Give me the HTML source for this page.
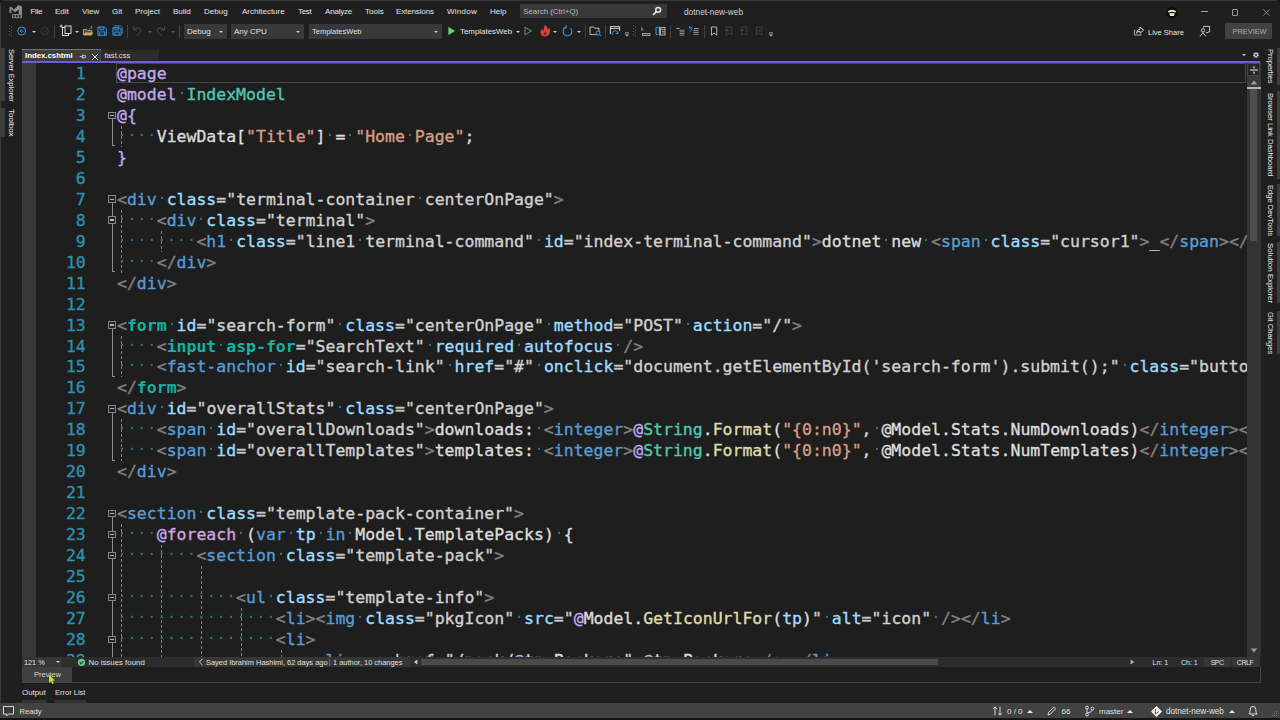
<!DOCTYPE html>
<html lang="en">
<head>
<meta charset="utf-8">
<title>Index.cshtml - dotnet-new-web</title>
<style>
*{box-sizing:border-box;margin:0;padding:0}
html,body{width:1280px;height:720px;overflow:hidden;background:#141414}
body{position:relative;font-family:"Liberation Sans","DejaVu Sans",sans-serif;font-size:8px;color:#e4e4e4;-webkit-font-smoothing:antialiased}
.abs{position:absolute}
#win{position:absolute;left:0;top:0;width:1280px;height:718px;background:#1f1f1f;border-radius:5px 5px 0 0;overflow:hidden}
/* menu */
.menu span{position:absolute;top:6.7px;line-height:10px;font-size:8px;color:#e6e6e6;white-space:nowrap}
#search{left:520px;top:3.7px;width:147px;height:14.7px;background:#383838}
#search span{position:absolute;left:3.3px;top:3px;line-height:10px;font-size:7.8px;color:#bcbcbc}
#title{left:684px;top:6.7px;line-height:10px;font-size:8.3px;color:#d0d0d0}
/* toolbar */
.combo{position:absolute;top:24.3px;height:14.6px;background:#383838;font-size:8px;line-height:15px;color:#e0e0e0;padding-left:3px;white-space:nowrap}
.combo:after{content:"";position:absolute;right:4px;top:7px;border:2px solid transparent;border-top:2.5px solid #d0d0d0;border-bottom:0}
.dd{position:absolute;width:0;height:0;border:2px solid transparent;border-top:2.5px solid #d0d0d0;border-bottom:0}
.sep{position:absolute;top:25px;width:1px;height:13px;background:#424242}
.tbt{position:absolute;top:26px;line-height:10px;font-size:8px;color:#e6e6e6;white-space:nowrap}
/* tabs */
#tabA{left:22px;top:49px;width:79px;height:12px;background:#3d3d3d;border-top:1px solid #7160e8}
#tabA b{position:absolute;left:3px;top:1px;line-height:10px;font-size:7.9px;color:#fff;font-weight:bold;letter-spacing:-0.05px}
#tabB{left:101px;top:50px;width:58px;height:11px;background:#2b2b2b}
#tabB span{position:absolute;left:3.5px;top:0.8px;line-height:10px;font-size:7.6px;color:#e0e0e0}
#tabline{left:22px;top:60.7px;width:1238px;height:2.2px;background:#6b5fd6;z-index:3}
/* side */
.vtab{position:absolute;writing-mode:vertical-rl;font-size:7.6px;line-height:10px;color:#ececec;white-space:nowrap}
.bar{position:absolute;background:#3d3d3d}
/* editor */
#ed{left:22px;top:62px;width:1225px;height:595px;background:#1e1e1e;overflow:hidden}
#gut{left:0;top:0;width:14px;height:595px;background:#383838}
.l{position:absolute;left:95px;height:21px;line-height:21px;white-space:pre;font-family:"DejaVu Sans Mono","Liberation Mono",monospace;font-size:16.5px;letter-spacing:-0.009px;color:#dcdcdc;-webkit-text-stroke:0.35px currentColor}
.n{position:absolute;left:30px;width:33.8px;text-align:right;height:21px;line-height:21px;font-family:"DejaVu Sans Mono","Liberation Mono",monospace;font-size:16.5px;letter-spacing:-0.009px;color:#2b91af;-webkit-text-stroke:0.35px currentColor}
.w{background:radial-gradient(circle at 50% 41%,#23768e 0,#23768e 0.9px,rgba(35,118,142,0) 1.5px) 0 0/1ch 100% repeat-x}
.rz{color:#c2a7ee}.ty{color:#4ec9b0}.st{color:#d69d85}.dl{color:#808080}.el{color:#569cd6}.at{color:#9cdcfe}.av{color:#d0d0d0}
.kw{color:#569cd6}.ck{color:#d8a0df}.mt{color:#dcdcaa}.lv{color:#9cdcfe}.th{color:#14b2a4;font-weight:bold;-webkit-text-stroke:0}.op{color:#c8c8c8}
#cur{left:94px;top:1px;width:1130px;height:20px;border:1px solid #464646}
.cb{position:absolute;left:86px;width:7.5px;height:7.5px;border:1px solid #868686;background:#242424}
.cb:after{content:"";position:absolute;left:1px;top:2.2px;width:3.5px;height:1.2px;background:#b4b4b4}
.vl{position:absolute;left:89.5px;width:1.2px;background:#8e8e8e}
.ft{position:absolute;left:89.5px;width:3.4px;height:1px;background:#8e8e8e}
.ig{position:absolute;width:1px;background:repeating-linear-gradient(to bottom,#808080 0,#808080 2.6px,transparent 2.6px,transparent 5px)}
/* scrollbar */
#vs{left:1247px;top:62px;width:14px;height:595px;background:#333}
/* bottom */
.sb{font-size:8px;line-height:10px;color:#e0e0e0;white-space:nowrap;position:absolute}
</style>
</head>
<body>
<div id="win">
<!-- MENU -->
<div class="menu">
<span style="left:30.5px;letter-spacing:-0.3px">File</span><span style="left:55px">Edit</span><span style="left:82px">View</span><span style="left:112px">Git</span><span style="left:135px">Project</span><span style="left:173px">Build</span><span style="left:204px">Debug</span><span style="left:242px">Architecture</span><span style="left:298px;letter-spacing:-0.35px">Test</span><span style="left:325px;letter-spacing:-0.2px">Analyze</span><span style="left:365px">Tools</span><span style="left:396px;letter-spacing:-0.13px">Extensions</span><span style="left:447px;letter-spacing:0.25px">Window</span><span style="left:490px">Help</span>
</div>
<div id="search" class="abs"><span>Search (Ctrl+Q)</span></div>
<div id="title" class="abs">dotnet-new-web</div>
<!-- LOGO + WINDOW CONTROLS -->
<div class="abs" style="left:0;top:0;width:1280px;height:1px;background:#363636"></div><div class="abs" style="left:0;top:0;width:1px;height:718px;background:#3a3a3a"></div>
<svg class="abs" style="left:8px;top:4px" width="16" height="16" viewBox="0 0 16 16"><path d="M1.5 3.5 L3 2.6 L5.8 5.6 L10.6 1 L14 2.6 V10 H10.8 V5.4 L7.2 8.2 L3.4 5.2 V9 H1.5 Z" fill="#8c8c8c"/><rect x="4" y="10" width="10" height="4.2" fill="#7a7a7a"/><rect x="5" y="11" width="1.6" height="2.2" fill="#2a2a2a"/><rect x="8" y="11" width="1.6" height="2.2" fill="#2a2a2a"/><rect x="11" y="11" width="1.6" height="2.2" fill="#2a2a2a"/></svg>
<svg class="abs" style="left:652px;top:6px" width="10" height="10" viewBox="0 0 10 10"><circle cx="6.2" cy="3.8" r="2.4" fill="none" stroke="#e8e8e8" stroke-width="1.5"/><path d="M4.4 5.6 L1 9" stroke="#e8e8e8" stroke-width="1.7"/></svg>
<svg class="abs" style="left:1165px;top:5px" width="14" height="14" viewBox="0 0 14 14"><circle cx="7" cy="7.5" r="6" fill="#0c0c0c"/><path d="M2.5 6.5 Q7 3 11.5 6.5 L10 7.5 Q7 6.2 4 7.5 Z" fill="#efe9d8"/><rect x="4.5" y="8" width="5" height="2" fill="#d9c9a0"/><rect x="5" y="9.5" width="4" height="1.5" fill="#e8e8e8"/></svg>
<div class="abs" style="left:1201px;top:11.3px;width:6.5px;height:1px;background:#9e9e9e"></div>
<div class="abs" style="left:1232.3px;top:8.6px;width:6.2px;height:7px;border:0.8px solid #9a9a9a;border-radius:1px"></div>
<svg class="abs" style="left:1262px;top:7.5px" width="9" height="9" viewBox="0 0 9 9"><path d="M1.2 1.2 L7.6 7.6 M7.6 1.2 L1.2 7.6" stroke="#9e9e9e" stroke-width="0.8"/></svg>
<!-- TOOLBAR -->
<svg class="abs" style="left:8px;top:24px" width="6" height="15" viewBox="0 0 6 15"><g fill="#5a5a5a"><rect x="1" y="1" width="1" height="1"/><rect x="3" y="2.5" width="1" height="1"/><rect x="1" y="4" width="1" height="1"/><rect x="3" y="5.5" width="1" height="1"/><rect x="1" y="7" width="1" height="1"/><rect x="3" y="8.5" width="1" height="1"/><rect x="1" y="10" width="1" height="1"/><rect x="3" y="11.5" width="1" height="1"/></g></svg>
<svg class="abs" style="left:16px;top:25px" width="12" height="12" viewBox="0 0 12 12"><circle cx="5.7" cy="6" r="4" fill="none" stroke="#3a96dd" stroke-width="1"/><path d="M7.4 6 H4.4 M5.6 4.6 L4.2 6 L5.6 7.4" stroke="#3a96dd" stroke-width="0.9" fill="none"/></svg>
<div class="dd" style="left:31.5px;top:30.5px"></div>
<svg class="abs" style="left:39px;top:25px" width="12" height="12" viewBox="0 0 12 12"><circle cx="5.7" cy="6" r="3.7" fill="none" stroke="#3c3c3c" stroke-width="0.9"/><path d="M4.2 6 H7.2 M6 4.6 L7.4 6 L6 7.4" stroke="#3c3c3c" stroke-width="0.8" fill="none"/></svg>
<div class="sep" style="left:54px"></div>
<svg class="abs" style="left:59px;top:24px" width="14" height="14" viewBox="0 0 14 14"><rect x="3.5" y="3.5" width="6" height="8" fill="none" stroke="#d8d8d8" stroke-width="1"/><rect x="6" y="2" width="6" height="7.5" fill="#1f1f1f" stroke="#d8d8d8" stroke-width="1"/><path d="M2.2 0.6 V3.8 M0.6 2.2 H3.8" stroke="#e6c87a" stroke-width="1"/></svg>
<div class="dd" style="left:74.5px;top:30.5px"></div>
<svg class="abs" style="left:82px;top:24px" width="13" height="14" viewBox="0 0 13 14"><path d="M1.4 5.4 H4.6 L5.6 6.4 H9.8 V11 H1.4 Z" fill="#5e4c30" stroke="#dcb67a" stroke-width="0.8"/><path d="M1.4 11 L3 8.4 H11.2 L9.8 11 Z" fill="#c9a66e"/><path d="M7.6 5.4 Q7.8 3.4 10 3.2 M9 2 L10.4 3.2 L9 4.4" stroke="#3a96dd" stroke-width="0.9" fill="none"/></svg>
<svg class="abs" style="left:97.3px;top:26.1px" width="11" height="11" viewBox="0 0 11 11"><path d="M0.9 0.9 H7.6 L9.3 2.6 V9.3 H0.9 Z" fill="#1a3146" stroke="#3f9ce8" stroke-width="0.9"/><path d="M2.9 0.9 V3.5 H6.7 V0.9 M2.7 9.3 V5.9 H7.5 V9.3" fill="none" stroke="#3f9ce8" stroke-width="0.8"/></svg>
<svg class="abs" style="left:112.2px;top:25.4px" width="11" height="12" viewBox="0 0 11 12"><path d="M0.9 2.6 H7.4 L9.1 4.2 V10.2 H0.9 Z" fill="#1a3146" stroke="#3f9ce8" stroke-width="0.9"/><path d="M2.4 0.9 H8.6 L10.2 2.4 V8.6" fill="none" stroke="#3f9ce8" stroke-width="0.8"/><path d="M2.9 2.6 V4.8 H6.5 V2.6 M2.7 10.2 V7 H7.3 V10.2" fill="none" stroke="#3f9ce8" stroke-width="0.8"/></svg>
<div class="sep" style="left:127px"></div>
<svg class="abs" style="left:132px;top:25px" width="11" height="12" viewBox="0 0 11 12"><path d="M1.4 1.6 V5 H4.8 M1.6 4.8 Q5 1.6 8 3.4 Q9.8 5.2 7.6 7.8 L4.6 10.6" fill="none" stroke="#4c4c4c" stroke-width="1"/></svg>
<div class="dd" style="left:147.5px;top:30.5px;border-top-color:#5a5a5a"></div>
<svg class="abs" style="left:155px;top:25px" width="11" height="12" viewBox="0 0 11 12"><path d="M9.6 1.6 V5 H6.2 M9.4 4.8 Q6 1.6 3 3.4 Q1.2 5.2 3.4 7.8 L6.4 10.6" fill="none" stroke="#4c4c4c" stroke-width="1"/></svg>
<div class="dd" style="left:170.5px;top:30.5px;border-top-color:#5a5a5a"></div>
<div class="sep" style="left:179px"></div>
<svg class="abs" style="left:447px;top:26px" width="9" height="10" viewBox="0 0 9 10"><path d="M1.4 0.8 L8 5 L1.4 9.2 Z" fill="#62cf72"/></svg>
<div class="dd" style="left:515.5px;top:30.5px"></div>
<svg class="abs" style="left:523px;top:26px" width="10" height="10" viewBox="0 0 10 10"><path d="M2 1.2 L8.4 5 L2 8.8 Z" fill="none" stroke="#5a9e66" stroke-width="1"/></svg>
<svg class="abs" style="left:539px;top:24px" width="12" height="14" viewBox="0 0 12 14"><path d="M6 1 Q9 3 8.4 5.4 Q10.2 4.6 9.8 3 Q12 6 10.6 9.4 Q9.2 12.4 6 12.4 Q2.6 12.4 1.6 9.4 Q0.8 6.4 3.4 4.4 Q3.4 6.2 4.6 6.4 Q4.4 3.2 6 1 Z" fill="#cf4436"/><path d="M6 7.4 Q7.8 8.8 7 10.6 Q6.2 11.6 5.2 10.8 Q4.4 9.4 6 7.4 Z" fill="#7a2620"/></svg>
<div class="dd" style="left:553px;top:30.5px"></div>
<svg class="abs" style="left:561px;top:24px" width="13" height="14" viewBox="0 0 13 14"><path d="M5 3.2 A4.4 4.4 0 1 0 9.6 4.2" fill="none" stroke="#3a96dd" stroke-width="1.1"/><path d="M5.2 1 V4 H2.4" fill="none" stroke="#3a96dd" stroke-width="1"/></svg>
<div class="dd" style="left:577px;top:30.5px"></div>
<div class="sep" style="left:585px"></div>
<svg class="abs" style="left:589px;top:25px" width="13" height="12" viewBox="0 0 13 12"><path d="M1 2 H4.6 L5.6 3.2 H10 V9.6 H1 Z" fill="none" stroke="#dcb67a" stroke-width="1"/><circle cx="9" cy="8" r="2" fill="#1f1f1f" stroke="#3a96dd" stroke-width="1"/><path d="M10.4 9.4 L12 11" stroke="#3a96dd" stroke-width="1"/></svg>
<div class="sep" style="left:605px"></div>
<svg class="abs" style="left:609px;top:25px" width="13" height="12" viewBox="0 0 13 12"><path d="M1.4 9 V1.6 H10.6 V6" fill="none" stroke="#d8d8d8" stroke-width="1"/><path d="M1.4 3.4 H10.6" stroke="#d8d8d8" stroke-width="1"/><path d="M4 10 A2.6 2.6 0 1 1 8.6 8.4 M8.8 6.6 V8.6 H6.8" fill="none" stroke="#3a96dd" stroke-width="1"/></svg>
<svg class="abs" style="left:624px;top:32.3px" width="6" height="6" viewBox="0 0 6 6"><rect x="1" y="0.6" width="4" height="0.8" fill="#c4c4c4"/><path d="M1 2.6 H5 L3 4.6 Z" fill="#c4c4c4"/></svg>
<svg class="abs" style="left:632px;top:24px" width="6" height="15" viewBox="0 0 6 15"><g fill="#5a5a5a"><rect x="1" y="1" width="1" height="1"/><rect x="3" y="2.5" width="1" height="1"/><rect x="1" y="4" width="1" height="1"/><rect x="3" y="5.5" width="1" height="1"/><rect x="1" y="7" width="1" height="1"/><rect x="3" y="8.5" width="1" height="1"/><rect x="1" y="10" width="1" height="1"/><rect x="3" y="11.5" width="1" height="1"/></g></svg>
<svg class="abs" style="left:640px;top:25px" width="12" height="12" viewBox="0 0 12 12"><path d="M1.2 1.4 L1.2 6 L2.6 5 L4 5.6 Z" fill="#3a96dd"/><path d="M2.4 8.6 H10 V10.4 H2.4 Z" fill="none" stroke="#d0d0d0" stroke-width="0.8"/></svg>
<svg class="abs" style="left:654px;top:25px" width="13" height="12" viewBox="0 0 13 12"><path d="M4.2 2.4 H2 V9.6 H4.2" fill="none" stroke="#3a96dd" stroke-width="1"/><rect x="6.6" y="2.4" width="4.4" height="7.6" fill="none" stroke="#d0d0d0" stroke-width="0.8"/><path d="M6.6 4.4 H11 M8 6.4 H10.6 M8 8 H10.6" stroke="#d0d0d0" stroke-width="0.7"/><path d="M5.4 1.6 V10.6" stroke="#d0d0d0" stroke-width="0.8"/></svg>
<div class="sep" style="left:670px"></div>
<svg class="abs" style="left:675px;top:26px" width="11" height="10" viewBox="0 0 11 10"><path d="M1.4 2.4 H4.6" stroke="#d0d0d0" stroke-width="0.8"/><path d="M4.6 4.2 H9.4 M4.6 7.4 H9.4" stroke="#4fc27a" stroke-width="0.9"/><path d="M4.6 5.8 H9.4 M4.6 9 H9.4" stroke="#c0c0c0" stroke-width="0.7"/></svg>
<svg class="abs" style="left:688px;top:25px" width="12" height="11" viewBox="0 0 12 11"><path d="M1.6 2.4 Q3.2 1.6 4.2 3.4 L2 6.6 M1.4 1.4 V3.2 H3" stroke="#3a96dd" stroke-width="0.9" fill="none"/><path d="M6 3.6 H10.6" stroke="#d0d0d0" stroke-width="0.8"/><path d="M5.4 5.6 H10.6 M5.4 7.4 H10.6 M5.4 9.2 H10.6" stroke="#c0c0c0" stroke-width="0.7"/></svg>
<div class="sep" style="left:704px"></div>
<svg class="abs" style="left:709px;top:25px" width="10" height="12" viewBox="0 0 10 12"><path d="M2.4 2 H7.8 V10.2 L5.1 8 L2.4 10.2 Z" fill="none" stroke="#dcdcdc" stroke-width="0.8"/></svg>
<svg class="abs" style="left:724px;top:25px" width="10" height="12" viewBox="0 0 10 12"><path d="M2.4 2 H7.8 V10.2 L5.1 8 L2.4 10.2 Z M0.6 5.4 H4.4 M3 4 L4.4 5.4 L3 6.8" fill="none" stroke="#464646" stroke-width="0.8"/></svg>
<svg class="abs" style="left:739px;top:25px" width="10" height="12" viewBox="0 0 10 12"><path d="M2.4 2 H7.8 V10.2 L5.1 8 L2.4 10.2 Z M0.6 5.4 H4.4 M3 4 L4.4 5.4 L3 6.8" fill="none" stroke="#464646" stroke-width="0.8"/></svg>
<svg class="abs" style="left:754px;top:25px" width="10" height="12" viewBox="0 0 10 12"><path d="M2.4 2 H7.8 V10.2 L5.1 8 L2.4 10.2 Z M3.6 4 L6.6 7 M6.6 4 L3.6 7" fill="none" stroke="#464646" stroke-width="0.8"/></svg>
<svg class="abs" style="left:767.5px;top:32.3px" width="6" height="6" viewBox="0 0 6 6"><rect x="1" y="0.6" width="4" height="0.8" fill="#c4c4c4"/><path d="M1 2.6 H5 L3 4.6 Z" fill="#c4c4c4"/></svg>
<svg class="abs" style="left:1133px;top:25px" width="12" height="12" viewBox="0 0 12 12"><path d="M2.4 5.4 H1.4 V10 H8 V9" fill="none" stroke="#bdbdbd" stroke-width="0.9"/><path d="M3.4 8 Q3.8 4.4 7 4.2 V2 L10.6 5.2 L7 8.2 V6.2 Q4.8 6 3.4 8 Z" fill="none" stroke="#e0e0e0" stroke-width="0.9"/></svg>
<svg class="abs" style="left:1198px;top:24px" width="14" height="14" viewBox="0 0 14 14"><circle cx="5" cy="6.4" r="1.7" fill="none" stroke="#d8d8d8" stroke-width="0.9"/><path d="M2 12.6 L5 8.6 L8 12.6" fill="none" stroke="#d8d8d8" stroke-width="0.9"/><path d="M5.6 3.6 V2.4 H11.6 V8 H10 L8.8 9.2 V8" fill="none" stroke="#d8d8d8" stroke-width="0.9"/></svg>
<div class="combo" style="left:184px;width:43px">Debug</div>
<div class="combo" style="left:231px;width:73px">Any CPU</div>
<div class="combo" style="left:309px;width:133px;font-size:7.5px">TemplatesWeb</div>
<div class="tbt" style="left:460px;top:26.8px;font-size:7.9px">TemplatesWeb</div>
<div class="tbt" style="left:1148px;top:28px;font-size:7.5px">Live Share</div>
<div class="abs" style="left:1225px;top:23px;width:47px;height:16px;background:#424242"><span class="abs" style="left:7.5px;top:3.8px;font-size:7.4px;line-height:10px;color:#adadad">PREVIEW</span></div>
<!-- TABS -->
<div id="tabA" class="abs"><b>Index.cshtml</b><svg class="abs" style="left:57px;top:3px" width="8" height="7" viewBox="0 0 8 7"><path d="M0.6 3.6 H3.4 M3.4 1.6 V5.6 M3.4 2.4 H6.4 V4.8 H3.4" fill="none" stroke="#e0e0e0" stroke-width="0.8"/></svg><svg class="abs" style="left:68.5px;top:2.5px" width="8" height="8" viewBox="0 0 8 8"><path d="M1 1 L7 7 M7 1 L1 7" stroke="#f0f0f0" stroke-width="1"/></svg></div>
<div id="tabB" class="abs"><span>fast.css</span></div>
<div id="tabline" class="abs"></div>
<!-- SIDE TABS -->
<div class="bar" style="left:0;top:48px;width:5px;height:53px"></div>
<div class="bar" style="left:0;top:108px;width:5px;height:29px"></div>
<div class="vtab" style="left:6.3px;top:49px">Server Explorer</div>
<div class="vtab" style="left:6.3px;top:109px;font-size:8px">Toolbox</div>
<div class="bar" style="left:1277px;top:48px;width:3px;height:37px"></div>
<div class="bar" style="left:1277px;top:91px;width:3px;height:88px"></div>
<div class="bar" style="left:1277px;top:184px;width:3px;height:52px"></div>
<div class="bar" style="left:1277px;top:242px;width:3px;height:61px"></div>
<div class="bar" style="left:1277px;top:311px;width:3px;height:43px"></div>
<div class="vtab" style="left:1265px;top:49px">Properties</div>
<div class="vtab" style="left:1265px;top:93px">Browser Link Dashboard</div>
<div class="vtab" style="left:1265px;top:185px">Edge DevTools</div>
<div class="vtab" style="left:1265px;top:243px;font-size:7.9px">Solution Explorer</div>
<div class="vtab" style="left:1265px;top:311.5px">Git Changes</div>
<!-- tab well right -->
<div class="dd" style="left:1242px;top:54px"></div>
<svg class="abs" style="left:1252px;top:51px" width="8" height="8" viewBox="0 0 8 8"><circle cx="4" cy="4" r="2.1" fill="none" stroke="#d8d8d8" stroke-width="1.5" stroke-dasharray="1.1 0.55"/><circle cx="4" cy="4" r="1.5" fill="none" stroke="#d8d8d8" stroke-width="0.9"/></svg>
<!-- SCROLLBAR -->
<div id="vs" class="abs">
<div class="abs" style="left:0;top:1px;width:13px;height:13px;background:#262626;border:1px solid #444"></div>
<svg class="abs" style="left:2px;top:3px" width="10" height="10" viewBox="0 0 10 10"><path d="M1 5 H9 M5 1.2 V3.6 M5 6.4 V8.8" stroke="#f0f0f0" stroke-width="1.1"/></svg>
<div class="abs" style="left:0;top:14px;width:14px;height:11px;background:#3a3a3a"></div>
<svg class="abs" style="left:3px;top:18px" width="8" height="5" viewBox="0 0 8 5"><path d="M0.6 4.6 L4 0.6 L7.4 4.6 Z" fill="#999"/></svg>
<div class="abs" style="left:3px;top:26px;width:7px;height:153px;background:#4d4d4d"></div>
<div class="abs" style="left:0;top:25px;width:14px;height:2px;background:#b4b4b4"></div>
<svg class="abs" style="left:3px;top:586px" width="8" height="5" viewBox="0 0 8 5"><path d="M0.6 0.4 L4 4.4 L7.4 0.4 Z" fill="#999"/></svg>
</div>
<!-- EDITOR -->
<div id="ed" class="abs">
<div id="gut" class="abs"></div>
<div id="cur" class="abs"></div>
<div id="outl">
<div class="vl" style="top:56.9px;height:27.4px"></div><div class="ft" style="top:83.4px"></div>
<div class="vl" style="top:140.8px;height:69.4px"></div><div class="ft" style="top:209.1px"></div>
<div class="vl" style="top:266.6px;height:48.4px"></div><div class="ft" style="top:313.9px"></div>
<div class="vl" style="top:350.4px;height:48.4px"></div><div class="ft" style="top:397.8px"></div>
<div class="vl" style="top:455.2px;height:144.8px"></div>
<div class="cb" style="top:49.5px"></div>
<div class="cb" style="top:133.4px"></div>
<div class="cb" style="top:154.3px"></div>
<div class="cb" style="top:259.2px"></div>
<div class="cb" style="top:343.0px"></div>
<div class="cb" style="top:447.8px"></div>
<div class="cb" style="top:468.8px"></div>
<div class="cb" style="top:489.7px"></div>
<div class="cb" style="top:531.7px"></div>
<div class="cb" style="top:573.6px"></div>
<div class="ig" style="left:99px;top:63.9px;height:21.0px"></div>
<div class="ig" style="left:99px;top:147.7px;height:62.9px"></div>
<div class="ig" style="left:139px;top:168.7px;height:21.0px"></div>
<div class="ig" style="left:99px;top:273.5px;height:41.9px"></div>
<div class="ig" style="left:99px;top:357.4px;height:41.9px"></div>
<div class="ig" style="left:99px;top:462.2px;height:137.8px"></div>
<div class="ig" style="left:139px;top:483.1px;height:116.9px"></div>
<div class="ig" style="left:179px;top:504.1px;height:95.9px"></div>
<div class="ig" style="left:219px;top:546.0px;height:54.0px"></div>
<div class="ig" style="left:259px;top:588.0px;height:12.0px"></div>
</div>
<div id="code">
<div class="n" style="top:1.00px">1</div><div class="l" style="top:1.00px"><span class="rz">@page</span></div>
<div class="n" style="top:21.96px">2</div><div class="l" style="top:21.96px"><span class="rz">@model</span><span class="w"> </span><span class="ty">IndexModel</span></div>
<div class="n" style="top:42.93px">3</div><div class="l" style="top:42.93px"><span class="rz">@{</span></div>
<div class="n" style="top:63.89px">4</div><div class="l" style="top:63.89px"><span class="w">    </span>ViewData[<span class="st">"Title"</span>]<span class="w"> </span>=<span class="w"> </span><span class="st">"Home<span class="w"> </span>Page"</span>;</div>
<div class="n" style="top:84.85px">5</div><div class="l" style="top:84.85px"><span class="rz">}</span></div>
<div class="n" style="top:105.81px">6</div><div class="l" style="top:105.81px"></div>
<div class="n" style="top:126.78px">7</div><div class="l" style="top:126.78px"><span class="dl">&lt;</span><span class="el">div</span><span class="w"> </span><span class="at">class</span><span class="op">=</span><span class="av">"terminal-container<span class="w"> </span>centerOnPage"</span><span class="dl">&gt;</span></div>
<div class="n" style="top:147.74px">8</div><div class="l" style="top:147.74px"><span class="w">    </span><span class="dl">&lt;</span><span class="el">div</span><span class="w"> </span><span class="at">class</span><span class="op">=</span><span class="av">"terminal"</span><span class="dl">&gt;</span></div>
<div class="n" style="top:168.70px">9</div><div class="l" style="top:168.70px"><span class="w">        </span><span class="dl">&lt;</span><span class="el">h1</span><span class="w"> </span><span class="at">class</span><span class="op">=</span><span class="av">"line1<span class="w"> </span>terminal-command"</span><span class="w"> </span><span class="at">id</span><span class="op">=</span><span class="av">"index-terminal-command"</span><span class="dl">&gt;</span>dotnet<span class="w"> </span>new<span class="w"> </span><span class="dl">&lt;</span><span class="el">span</span><span class="w"> </span><span class="at">class</span><span class="op">=</span><span class="av">"cursor1"</span><span class="dl">&gt;</span>_<span class="dl">&lt;/</span><span class="el">span</span><span class="dl">&gt;</span><span class="dl">&lt;/</span><span class="el">h1</span><span class="dl">&gt;</span></div>
<div class="n" style="top:189.67px">10</div><div class="l" style="top:189.67px"><span class="w">    </span><span class="dl">&lt;/</span><span class="el">div</span><span class="dl">&gt;</span></div>
<div class="n" style="top:210.63px">11</div><div class="l" style="top:210.63px"><span class="dl">&lt;/</span><span class="el">div</span><span class="dl">&gt;</span></div>
<div class="n" style="top:231.59px">12</div><div class="l" style="top:231.59px"></div>
<div class="n" style="top:252.56px">13</div><div class="l" style="top:252.56px"><span class="dl">&lt;</span><span class="th">form</span><span class="w"> </span><span class="at">id</span><span class="op">=</span><span class="av">"search-form"</span><span class="w"> </span><span class="at">class</span><span class="op">=</span><span class="av">"centerOnPage"</span><span class="w"> </span><span class="at">method</span><span class="op">=</span><span class="av">"POST"</span><span class="w"> </span><span class="at">action</span><span class="op">=</span><span class="av">"/"</span><span class="dl">&gt;</span></div>
<div class="n" style="top:273.52px">14</div><div class="l" style="top:273.52px"><span class="w">    </span><span class="dl">&lt;</span><span class="th">input</span><span class="w"> </span><span class="th">asp-for</span><span class="op">=</span><span class="av">"SearchText"</span><span class="w"> </span><span class="at">required</span><span class="w"> </span><span class="at">autofocus</span><span class="dl"><span class="w"> </span>/&gt;</span></div>
<div class="n" style="top:294.48px">15</div><div class="l" style="top:294.48px"><span class="w">    </span><span class="dl">&lt;</span><span class="el">fast-anchor</span><span class="w"> </span><span class="at">id</span><span class="op">=</span><span class="av">"search-link"</span><span class="w"> </span><span class="at">href</span><span class="op">=</span><span class="av">"#"</span><span class="w"> </span><span class="at">onclick</span><span class="op">=</span><span class="av">"document.getElementById('search-form').submit();"</span><span class="w"> </span><span class="at">class</span><span class="op">=</span><span class="av">"button<span class="w"> </span>primary"</span><span class="dl">&gt;</span></div>
<div class="n" style="top:315.44px">16</div><div class="l" style="top:315.44px"><span class="dl">&lt;/</span><span class="th">form</span><span class="dl">&gt;</span></div>
<div class="n" style="top:336.41px">17</div><div class="l" style="top:336.41px"><span class="dl">&lt;</span><span class="el">div</span><span class="w"> </span><span class="at">id</span><span class="op">=</span><span class="av">"overallStats"</span><span class="w"> </span><span class="at">class</span><span class="op">=</span><span class="av">"centerOnPage"</span><span class="dl">&gt;</span></div>
<div class="n" style="top:357.37px">18</div><div class="l" style="top:357.37px"><span class="w">    </span><span class="dl">&lt;</span><span class="el">span</span><span class="w"> </span><span class="at">id</span><span class="op">=</span><span class="av">"overallDownloads"</span><span class="dl">&gt;</span>downloads:<span class="w"> </span><span class="dl">&lt;</span><span class="el">integer</span><span class="dl">&gt;</span><span class="rz">@</span><span class="ty">String</span>.<span class="mt">Format</span>(<span class="st">"{0:n0}"</span>,<span class="w"> </span>@Model.Stats.NumDownloads)<span class="dl">&lt;/</span><span class="el">integer</span><span class="dl">&gt;</span><span class="dl">&lt;/</span><span class="el">span</span><span class="dl">&gt;</span></div>
<div class="n" style="top:378.33px">19</div><div class="l" style="top:378.33px"><span class="w">    </span><span class="dl">&lt;</span><span class="el">span</span><span class="w"> </span><span class="at">id</span><span class="op">=</span><span class="av">"overallTemplates"</span><span class="dl">&gt;</span>templates:<span class="w"> </span><span class="dl">&lt;</span><span class="el">integer</span><span class="dl">&gt;</span><span class="rz">@</span><span class="ty">String</span>.<span class="mt">Format</span>(<span class="st">"{0:n0}"</span>,<span class="w"> </span>@Model.Stats.NumTemplates)<span class="dl">&lt;/</span><span class="el">integer</span><span class="dl">&gt;</span><span class="dl">&lt;/</span><span class="el">span</span><span class="dl">&gt;</span></div>
<div class="n" style="top:399.30px">20</div><div class="l" style="top:399.30px"><span class="dl">&lt;/</span><span class="el">div</span><span class="dl">&gt;</span></div>
<div class="n" style="top:420.26px">21</div><div class="l" style="top:420.26px"></div>
<div class="n" style="top:441.22px">22</div><div class="l" style="top:441.22px"><span class="dl">&lt;</span><span class="el">section</span><span class="w"> </span><span class="at">class</span><span class="op">=</span><span class="av">"template-pack-container"</span><span class="dl">&gt;</span></div>
<div class="n" style="top:462.19px">23</div><div class="l" style="top:462.19px"><span class="w">    </span><span class="rz">@</span><span class="ck">foreach</span><span class="w"> </span>(<span class="kw">var</span><span class="w"> </span><span class="lv">tp</span><span class="w"> </span><span class="kw">in</span><span class="w"> </span>Model.TemplatePacks)<span class="w"> </span>{</div>
<div class="n" style="top:483.15px">24</div><div class="l" style="top:483.15px"><span class="w">        </span><span class="dl">&lt;</span><span class="el">section</span><span class="w"> </span><span class="at">class</span><span class="op">=</span><span class="av">"template-pack"</span><span class="dl">&gt;</span></div>
<div class="n" style="top:504.11px">25</div><div class="l" style="top:504.11px"></div>
<div class="n" style="top:525.08px">26</div><div class="l" style="top:525.08px"><span class="w">            </span><span class="dl">&lt;</span><span class="el">ul</span><span class="w"> </span><span class="at">class</span><span class="op">=</span><span class="av">"template-info"</span><span class="dl">&gt;</span></div>
<div class="n" style="top:546.04px">27</div><div class="l" style="top:546.04px"><span class="w">                </span><span class="dl">&lt;</span><span class="el">li</span><span class="dl">&gt;</span><span class="dl">&lt;</span><span class="el">img</span><span class="w"> </span><span class="at">class</span><span class="op">=</span><span class="av">"pkgIcon"</span><span class="w"> </span><span class="at">src</span><span class="op">=</span><span class="av">"</span><span class="rz">@</span>Model.<span class="mt">GetIconUrlFor</span>(<span class="lv">tp</span>)<span class="av">"</span><span class="w"> </span><span class="at">alt</span><span class="op">=</span><span class="av">"icon"</span><span class="dl"><span class="w"> </span>/&gt;</span><span class="dl">&lt;/</span><span class="el">li</span><span class="dl">&gt;</span></div>
<div class="n" style="top:567.00px">28</div><div class="l" style="top:567.00px"><span class="w">                </span><span class="dl">&lt;</span><span class="el">li</span><span class="dl">&gt;</span></div>
<div class="n" style="top:587.96px">29</div><div class="l" style="top:587.96px"><span class="w">                    </span><span class="dl">&lt;</span><span class="el">li</span><span class="dl">&gt;</span><span class="w"> </span><span class="dl">&lt;</span><span class="el">a</span><span class="w"> </span><span class="at">href</span><span class="op">=</span><span class="av">"/pack/</span><span class="rz">@</span>tp.Package<span class="av">"</span><span class="dl">&gt;</span><span class="rz">@</span>tp.Package<span class="dl">&lt;/</span><span class="el">a</span><span class="dl">&gt;</span><span class="dl">&lt;/</span><span class="el">li</span><span class="dl">&gt;</span></div>
</div>
</div>
<!-- BOTTOM -->
<div class="abs" style="left:22px;top:657px;width:1238px;height:10px;background:#2d2d2d"></div>
<div class="abs" style="left:22px;top:657px;width:40px;height:10px;background:#363636"></div>
<div class="sb" style="left:24px;top:657.7px;font-size:7.3px">121 %</div>
<div class="dd" style="left:56px;top:661px"></div>
<svg class="abs" style="left:77px;top:658px" width="9" height="9" viewBox="0 0 9 9"><circle cx="4.5" cy="4.3" r="3.6" fill="#5fcf80"/><path d="M2.7 4.4 L4 5.7 L6.4 3" fill="none" stroke="#1d3a26" stroke-width="1.1"/></svg>
<div class="sb" style="left:88.5px;top:657.7px;font-size:7.85px">No issues found</div>
<div class="abs" style="left:194px;top:657px;width:216px;height:10px;background:#353535"></div>
<svg class="abs" style="left:198px;top:658px" width="6" height="8" viewBox="0 0 6 8"><path d="M4.6 0.8 L1.4 4 L4.6 7.2" fill="none" stroke="#e0e0e0" stroke-width="0.9"/></svg>
<div class="sb" style="left:206px;top:657.7px;font-size:7.45px">Sayed Ibrahim Hashimi, 62 days ago</div>
<div class="abs" style="left:329px;top:659px;width:1px;height:7px;background:#6a6a6a"></div>
<div class="sb" style="left:333px;top:657.7px;font-size:7.45px">1 author, 10 changes</div>
<svg class="abs" style="left:413px;top:659px" width="5" height="6" viewBox="0 0 5 6"><path d="M4.4 0.4 V5.6 L0.8 3 Z" fill="#c8c8c8"/></svg>
<div class="abs" style="left:421px;top:659px;width:517px;height:5.5px;background:#4a4a4a"></div>
<svg class="abs" style="left:1130px;top:659px" width="5" height="6" viewBox="0 0 5 6"><path d="M0.6 0.4 V5.6 L4.2 3 Z" fill="#b8b8b8"/></svg>
<div class="sb" style="left:1152.5px;top:657.7px;font-size:7px">Ln: 1</div>
<div class="sb" style="left:1181px;top:657.7px;font-size:7px">Ch: 1</div>
<div class="abs" style="left:1204px;top:657px;width:56px;height:10px;background:#363636"></div>
<div class="sb" style="left:1210.7px;top:657.7px;font-size:7px;letter-spacing:-0.5px">SPC</div>
<div class="abs" style="left:1231px;top:658px;width:1px;height:8px;background:#2a2a2a"></div>
<div class="sb" style="left:1236.8px;top:657.7px;font-size:7px;letter-spacing:-0.45px">CRLF</div>
<!-- preview panel -->
<div class="abs" style="left:22px;top:667px;width:1239px;height:16px;background:#1e1e1e;border-right:1px solid #444;border-bottom:1px solid #444"></div>
<div class="abs" style="left:22px;top:667px;width:50px;height:15px;background:#3f3f3f"></div>
<div class="sb" style="left:34px;top:669.7px;color:#d4d4d4;font-size:7.6px">Preview</div>
<svg class="abs" style="left:47px;top:673px" width="10" height="12" viewBox="0 0 10 12"><path d="M2 1.6 L2 10 L4 8.2 L5.4 11 L6.8 10.4 L5.4 7.6 L8 7.4 Z" fill="#c6e01a"/></svg>
<!-- tool window tabs -->
<div class="sb" style="left:22px;top:687.7px;font-size:7.9px">Output</div>
<div class="sb" style="left:55px;top:687.7px;font-size:7.5px">Error List</div>
<div class="abs" style="left:22px;top:699.5px;width:25px;height:4px;background:#333"></div>
<div class="abs" style="left:55px;top:699.5px;width:31px;height:4px;background:#333"></div>
<!-- STATUS BAR -->
<div class="abs" style="left:0;top:703px;width:1280px;height:15.5px;background:#424242"></div>
<svg class="abs" style="left:2px;top:705px" width="13" height="13" viewBox="0 0 13 13"><path d="M1.5 1.5 H11.5 V9 H6.4 L4.6 11 V9 H1.5 Z" fill="#3a3a3a" stroke="#e8e8e8" stroke-width="0.9"/></svg>
<div class="sb" style="left:19.5px;top:706.8px;font-size:7.6px">Ready</div>
<svg class="abs" style="left:992px;top:705px" width="12" height="12" viewBox="0 0 12 12"><path d="M3 10.4 V2 M1.2 3.8 L3 1.8 L4.8 3.8" fill="none" stroke="#e8e8e8" stroke-width="0.9"/><path d="M8 1.6 V10 M6.2 8.2 L8 10.2 L9.8 8.2" fill="none" stroke="#e8e8e8" stroke-width="0.9"/></svg>
<div class="sb" style="left:1007px;top:706.8px">0 / 0</div>
<div class="dd" style="left:1026.5px;top:709.5px;border-top:0;border-bottom:3.4px solid #e8e8e8;border-left-width:3px;border-right-width:3px"></div>
<svg class="abs" style="left:1046px;top:705px" width="11" height="12" viewBox="0 0 11 12"><path d="M2 10 L2.6 7.4 L7.8 2 L9.6 3.8 L4.4 9.2 Z" fill="none" stroke="#e8e8e8" stroke-width="0.9"/></svg>
<div class="sb" style="left:1061.5px;top:706.8px">66</div>
<svg class="abs" style="left:1084px;top:705px" width="11" height="12" viewBox="0 0 11 12"><circle cx="3" cy="2.6" r="1.4" fill="none" stroke="#e8e8e8" stroke-width="0.9"/><circle cx="3" cy="9.6" r="1.4" fill="none" stroke="#e8e8e8" stroke-width="0.9"/><circle cx="8.4" cy="3.6" r="1.4" fill="none" stroke="#e8e8e8" stroke-width="0.9"/><path d="M3 4 V8.2 M8.4 5 Q8.2 7 3.4 8" fill="none" stroke="#e8e8e8" stroke-width="0.9"/></svg>
<div class="sb" style="left:1099px;top:706.8px">master</div>
<div class="dd" style="left:1127px;top:709.5px;border-top:0;border-bottom:3.4px solid #e8e8e8;border-left-width:3px;border-right-width:3px"></div>
<svg class="abs" style="left:1150px;top:705px" width="13" height="13" viewBox="0 0 13 13"><path d="M6.5 1 L12 6.5 L6.5 12 L1 6.5 Z" fill="#f0f0f0"/><path d="M5.4 4 V9 L8.6 6.6" fill="none" stroke="#424242" stroke-width="0.9"/></svg>
<div class="sb" style="left:1166px;top:706.8px;font-size:8.15px">dotnet-new-web</div>
<div class="dd" style="left:1229px;top:709.5px;border-top:0;border-bottom:3.4px solid #e8e8e8;border-left-width:3px;border-right-width:3px"></div>
<svg class="abs" style="left:1247px;top:704px" width="12" height="14" viewBox="0 0 12 14"><path d="M2 10 Q3.2 9 3.2 5.6 Q3.4 2.4 6 2.4 Q8.6 2.4 8.8 5.6 Q8.8 9 10 10 Z" fill="none" stroke="#f0f0f0" stroke-width="0.9"/><path d="M5 11.6 H7" stroke="#f0f0f0" stroke-width="0.9"/></svg>
<svg class="abs" style="left:1271px;top:710px" width="8" height="8" viewBox="0 0 8 8"><g fill="#777"><rect x="5" y="1" width="1" height="1"/><rect x="3" y="3" width="1" height="1"/><rect x="5" y="3" width="1" height="1"/><rect x="1" y="5" width="1" height="1"/><rect x="3" y="5" width="1" height="1"/><rect x="5" y="5" width="1" height="1"/></g></svg>
</div>
</body>
</html>
